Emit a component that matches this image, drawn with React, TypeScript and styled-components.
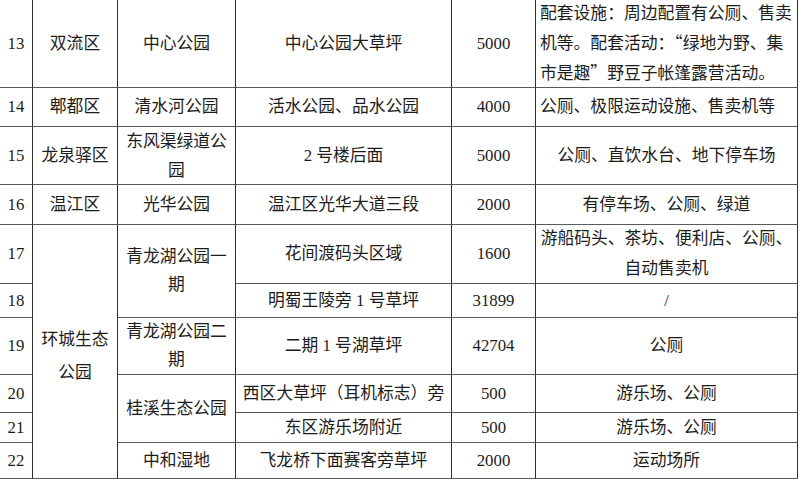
import React from 'react'
import styled, {createGlobalStyle} from 'styled-components'

const GlobalStyle = createGlobalStyle`
  body {
    margin: 0;
    background: #fff;
  }
`

const Sheet = styled.div`
  width: 798px;
  display: grid;
  grid-template-columns: 33px 85px 118px 216px 84px 262px;
  grid-template-rows: 88px 39px 58px 40px 59px 34px 57px 38px 30px 36px;
  font-family: "Liberation Serif", "Noto Sans CJK SC", serif;
  font-size: 16.8px;
  color: #1c1c1c;
`

const Cell = styled.div<{$rows?: number; $left?: boolean; $shift?: number}>`
  grid-row: span ${props => props.$rows ?? 1};
  display: flex;
  align-items: center;
  justify-content: ${props => props.$left ? 'flex-start' : 'center'};
  padding: ${props => props.$shift ?? 0}px 4px 0;
  border-right: 1px solid #2e2e2e;
  border-bottom: 1px solid #5a5a5a;
  box-sizing: border-box;
  overflow: hidden;
`

const Text = styled.p<{$lh?: number; $left?: boolean}>`
  margin: 0;
  line-height: ${props => props.$lh ?? 24}px;
  text-align: ${props => props.$left ? 'left' : 'center'};
  white-space: nowrap;
`

// quotes must come from the CJK font to get full-width glyphs
const Quote = styled.span`
  font-family: "Noto Sans CJK SC", sans-serif;
  font-feature-settings: "fwid" 1;
`

type C = {
    text: React.ReactNode
    rows?: number
    left?: boolean
    lh?: number
    shift?: number
}

const Row: React.FC<{cells: C[]}> = ({cells}) => (
    <>
        {cells.map((c, i) => (
            <Cell key={i} $rows={c.rows} $left={c.left} $shift={c.shift}>
                <Text $lh={c.lh} $left={c.left}>{c.text}</Text>
            </Cell>
        ))}
    </>
)

const App: React.FC = () => {
    return (
        <>
            <GlobalStyle/>
            <Sheet>
                <Row cells={[
                    {text: '13'},
                    {text: '双流区'},
                    {text: '中心公园'},
                    {text: '中心公园大草坪'},
                    {text: '5000'},
                    {
                        left: true, lh: 29, text: <>
                            配套设施：周边配置有公厕、售卖<br/>
                            机等。配套活动：<Quote>“</Quote>绿地为野、集<br/>
                            市是趣<Quote>”</Quote>野豆子帐篷露营活动。
                        </>
                    },
                ]}/>
                <Row cells={[
                    {text: '14'},
                    {text: '郫都区'},
                    {text: '清水河公园'},
                    {text: '活水公园、品水公园'},
                    {text: '4000'},
                    {text: '公厕、极限运动设施、售卖机等', left: true},
                ]}/>
                <Row cells={[
                    {text: '15'},
                    {text: '龙泉驿区'},
                    {text: <>东风渠绿道公<br/>园</>, lh: 29},
                    {text: '2 号楼后面'},
                    {text: '5000'},
                    {text: '公厕、直饮水台、地下停车场'},
                ]}/>
                <Row cells={[
                    {text: '16'},
                    {text: '温江区'},
                    {text: '光华公园'},
                    {text: '温江区光华大道三段'},
                    {text: '2000'},
                    {text: '有停车场、公厕、绿道'},
                ]}/>
                <Row cells={[
                    {text: '17'},
                    {text: <>环城生态<br/>公园</>, rows: 6, lh: 33, shift: 8},
                    {text: <>青龙湖公园一<br/>期</>, rows: 2, lh: 28},
                    {text: '花间渡码头区域'},
                    {text: '1600'},
                    {text: <>游船码头、茶坊、便利店、公厕、<br/>自动售卖机</>, lh: 30},
                ]}/>
                <Row cells={[
                    {text: '18'},
                    {text: '明蜀王陵旁 1 号草坪'},
                    {text: '31899'},
                    {text: '/'},
                ]}/>
                <Row cells={[
                    {text: '19'},
                    {text: <>青龙湖公园二<br/>期</>, lh: 28},
                    {text: '二期 1 号湖草坪'},
                    {text: '42704'},
                    {text: '公厕'},
                ]}/>
                <Row cells={[
                    {text: '20'},
                    {text: '桂溪生态公园', rows: 2},
                    {text: '西区大草坪（耳机标志）旁'},
                    {text: '500'},
                    {text: '游乐场、公厕'},
                ]}/>
                <Row cells={[
                    {text: '21'},
                    {text: '东区游乐场附近'},
                    {text: '500'},
                    {text: '游乐场、公厕'},
                ]}/>
                <Row cells={[
                    {text: '22'},
                    {text: '中和湿地'},
                    {text: '飞龙桥下面赛客旁草坪'},
                    {text: '2000'},
                    {text: '运动场所'},
                ]}/>
            </Sheet>
        </>
    )
}

export default App
